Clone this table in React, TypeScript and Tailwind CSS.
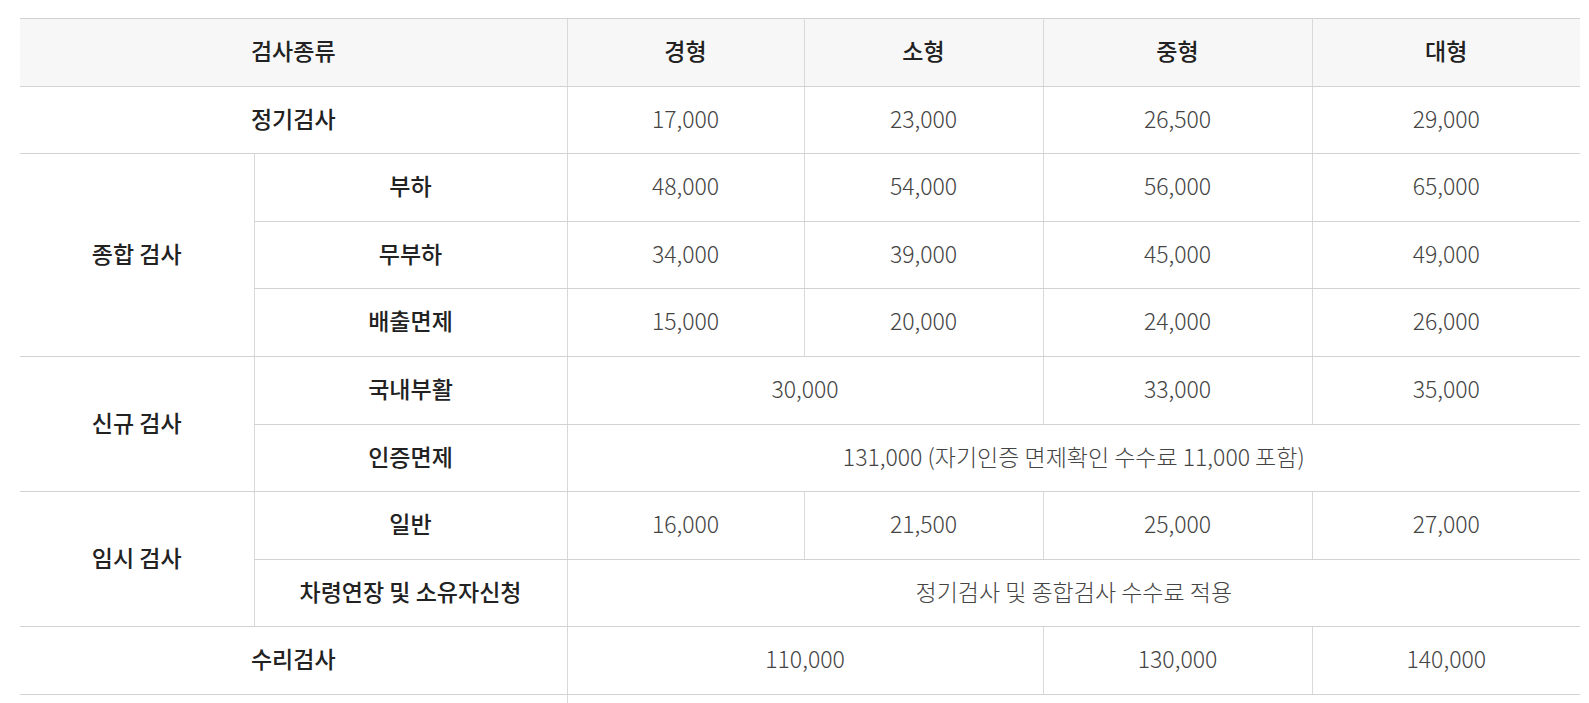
const font = { fontFamily: '"Noto Sans CJK KR", "Noto Sans", sans-serif' }

const sizes = ["경형", "소형", "중형", "대형"]

type Cell = { text: string; span?: number }

function Label({ text, colSpan, rowSpan, leftLine }: { text: string; colSpan?: number; rowSpan?: number; leftLine?: boolean }) {
  return (
    <td
      colSpan={colSpan}
      rowSpan={rowSpan}
      className={`h-[67.6px] pb-1 border-y border-[#d2d2d2] text-center text-[23px] font-medium text-[#222] ${leftLine ? "border-l border-l-[#d9d9d9]" : ""}`}
    >
      {text}
    </td>
  )
}

function Values({ cells }: { cells: Cell[] }) {
  return (
    <>
      {cells.map((c, i) => (
        <td
          key={i}
          colSpan={c.span}
          className={`h-[67.6px] pb-1 border-y border-l border-[#d2d2d2] border-l-[#d9d9d9] text-center text-[23px] font-light text-[#444] ${i === cells.length - 1 ? "" : "border-r border-r-[#d9d9d9]"}`}
        >
          {c.text}
        </td>
      ))}
    </>
  )
}

const v = (...xs: string[]): Cell[] => xs.map((text) => ({ text }))

export default function App() {
  return (
    <div className="bg-white min-h-screen pt-[18px] pl-5" style={font}>
      <table className="w-[1560px] table-fixed border-collapse">
        <colgroup>
          <col className="w-[234px]" />
          <col className="w-[313px]" />
          <col className="w-[237px]" />
          <col className="w-[239px]" />
          <col className="w-[269px]" />
          <col className="w-[268px]" />
        </colgroup>
        <thead>
          <tr className="bg-[#f7f7f7]">
            <th colSpan={2} className="h-[67.6px] pb-1 border-y border-[#d2d2d2] text-[23px] font-medium text-[#222]">
              검사종류
            </th>
            {sizes.map((s, i) => (
              <th
                key={s}
                className={`h-[67.6px] pb-1 border-y border-l border-[#d2d2d2] border-l-[#d9d9d9] text-[23px] font-medium text-[#222] ${i === 3 ? "" : "border-r border-r-[#d9d9d9]"}`}
              >
                {s}
              </th>
            ))}
          </tr>
        </thead>
        <tbody>
          <tr>
            <Label text="정기검사" colSpan={2} />
            <Values cells={v("17,000", "23,000", "26,500", "29,000")} />
          </tr>
          <tr>
            <Label text="종합 검사" rowSpan={3} />
            <Label text="부하" leftLine />
            <Values cells={v("48,000", "54,000", "56,000", "65,000")} />
          </tr>
          <tr>
            <Label text="무부하" leftLine />
            <Values cells={v("34,000", "39,000", "45,000", "49,000")} />
          </tr>
          <tr>
            <Label text="배출면제" leftLine />
            <Values cells={v("15,000", "20,000", "24,000", "26,000")} />
          </tr>
          <tr>
            <Label text="신규 검사" rowSpan={2} />
            <Label text="국내부활" leftLine />
            <Values cells={[{ text: "30,000", span: 2 }, { text: "33,000" }, { text: "35,000" }]} />
          </tr>
          <tr>
            <Label text="인증면제" leftLine />
            <Values cells={[{ text: "131,000 (자기인증 면제확인 수수료 11,000 포함)", span: 4 }]} />
          </tr>
          <tr>
            <Label text="임시 검사" rowSpan={2} />
            <Label text="일반" leftLine />
            <Values cells={v("16,000", "21,500", "25,000", "27,000")} />
          </tr>
          <tr>
            <Label text="차령연장 및 소유자신청" leftLine />
            <Values cells={[{ text: "정기검사 및 종합검사 수수료 적용", span: 4 }]} />
          </tr>
          <tr>
            <Label text="수리검사" colSpan={2} />
            <Values cells={[{ text: "110,000", span: 2 }, { text: "130,000" }, { text: "140,000" }]} />
          </tr>
          <tr>
            <Label text="" colSpan={2} />
            <Values cells={[{ text: "", span: 4 }]} />
          </tr>
        </tbody>
      </table>
    </div>
  )
}
